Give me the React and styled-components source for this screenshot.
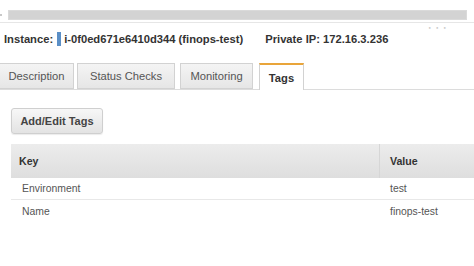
import React from "react";
import styled, { createGlobalStyle } from "styled-components";

const Global = createGlobalStyle`
  html, body {
    margin: 0;
    padding: 0;
    background: #fff;
  }
  body {
    font-family: "Liberation Sans", Arial, sans-serif;
    color: #333;
    width: 474px;
    height: 266px;
    overflow: hidden;
  }
`;

const Page = styled.div`
  width: 474px;
  height: 266px;
  overflow: hidden;
`;

const TopStrip = styled.div`
  height: 23px;
  border-bottom: 1px solid #e6e6e6;
  display: flex;
  align-items: flex-start;
  padding-top: 10px;
  box-sizing: border-box;
  position: relative;
`;

const Tick = styled.div`
  width: 2px;
  height: 2px;
  background: #c8c8c8;
  margin: 4px 6px 0 0;
`;

const Scroller = styled.div`
  width: 459px;
  height: 10px;
  background: #d3d3d3;
  border: 1px solid #dadada;
  box-sizing: border-box;
`;

const Dots = styled.div`
  position: absolute;
  right: 26px;
  top: 25px;
  font-size: 4px;
  letter-spacing: 2px;
  color: #c4c4c4;
`;

const InstanceRow = styled.div`
  display: flex;
  align-items: center;
  height: 16px;
  margin-top: 8px;
  padding-left: 4px;
  font-size: 11.2px;
  font-weight: bold;
  color: #333;
  white-space: nowrap;
`;

const Marker = styled.span`
  display: inline-block;
  width: 4px;
  height: 14px;
  background: #5b8fc6;
  margin: 0 3px 0 4px;
`;

const Ip = styled.span`
  margin-left: 22px;
`;

const TabBar = styled.div`
  display: flex;
  align-items: flex-end;
  margin-top: 16px;
  height: 26px;
  border-bottom: 1px solid #dcdcdc;
`;

const Tab = styled.div`
  box-sizing: border-box;
  height: ${(p) => (p.$active ? "27px" : "26px")};
  margin-bottom: ${(p) => (p.$active ? "-1px" : "0")};
  width: ${(p) => p.$w}px;
  margin-right: ${(p) => p.$gap}px;
  display: flex;
  align-items: center;
  justify-content: center;
  font-size: 11.2px;
  font-weight: ${(p) => (p.$active ? "bold" : "normal")};
  color: ${(p) => (p.$active ? "#333" : "#555")};
  background: ${(p) =>
    p.$active ? "#fff" : "linear-gradient(#f4f4f4, #e6e6e6)"};
  border: 1px solid #d2d2d2;
  border-top: ${(p) => (p.$active ? "2px solid #e9a53a" : "1px solid #d2d2d2")};
  border-bottom: ${(p) => (p.$active ? "none" : "1px solid #d2d2d2")};
  &:first-child {
    border-left: none;
  }
`;

const Content = styled.div`
  padding: 18px 0 0 11px;
`;

const Button = styled.div`
  box-sizing: border-box;
  width: 92px;
  height: 26px;
  display: flex;
  align-items: center;
  justify-content: center;
  font-size: 11px;
  font-weight: bold;
  color: #444;
  background: linear-gradient(#f7f7f7, #e3e3e3);
  border: 1px solid #cfcfcf;
  border-radius: 3px;
  box-shadow: 0 1px 1px rgba(0, 0, 0, 0.08);
`;

const Table = styled.div`
  margin-top: 10px;
  display: grid;
  grid-template-columns: 369px 1fr;
`;

const HeadCell = styled.div`
  height: 34px;
  display: flex;
  align-items: center;
  padding-left: ${(p) => (p.$first ? "8px" : "10px")};
  font-size: 10.6px;
  font-weight: bold;
  color: #333;
  background: linear-gradient(#ececec, #dedede);
  border-right: ${(p) => (p.$first ? "1px solid #d6d6d6" : "none")};
  box-sizing: border-box;
`;

const Cell = styled.div`
  height: 22px;
  display: flex;
  align-items: center;
  padding-left: ${(p) => (p.$first ? "11px" : "10px")};
  font-size: 10.4px;
  color: #555;
  border-bottom: ${(p) => (p.$last ? "none" : "1px solid #e8e8e8")};
  box-sizing: border-box;
`;

const rows = [
  { key: "Environment", value: "test" },
  { key: "Name", value: "finops-test" },
];

const tabs = [
  { label: "Description", w: 74, gap: 3 },
  { label: "Status Checks", w: 98, gap: 5 },
  { label: "Monitoring", w: 73, gap: 6 },
  { label: "Tags", w: 45, gap: 0, active: true },
];

export default function App() {
  return (
    <Page>
      <Global />
      <TopStrip>
        <Tick />
        <Scroller />
        <Dots>● ● ●</Dots>
      </TopStrip>
      <InstanceRow>
        Instance:
        <Marker />
        i-0f0ed671e6410d344 (finops-test)
        <Ip>Private IP: 172.16.3.236</Ip>
      </InstanceRow>
      <TabBar>
        {tabs.map((t) => (
          <Tab key={t.label} $w={t.w} $gap={t.gap} $active={t.active}>
            {t.label}
          </Tab>
        ))}
      </TabBar>
      <Content>
        <Button>Add/Edit Tags</Button>
        <Table>
          <HeadCell $first>Key</HeadCell>
          <HeadCell>Value</HeadCell>
          {rows.map((r, i) => (
            <React.Fragment key={r.key}>
              <Cell $first $last={i === rows.length - 1}>
                {r.key}
              </Cell>
              <Cell $last={i === rows.length - 1}>{r.value}</Cell>
            </React.Fragment>
          ))}
        </Table>
      </Content>
    </Page>
  );
}
